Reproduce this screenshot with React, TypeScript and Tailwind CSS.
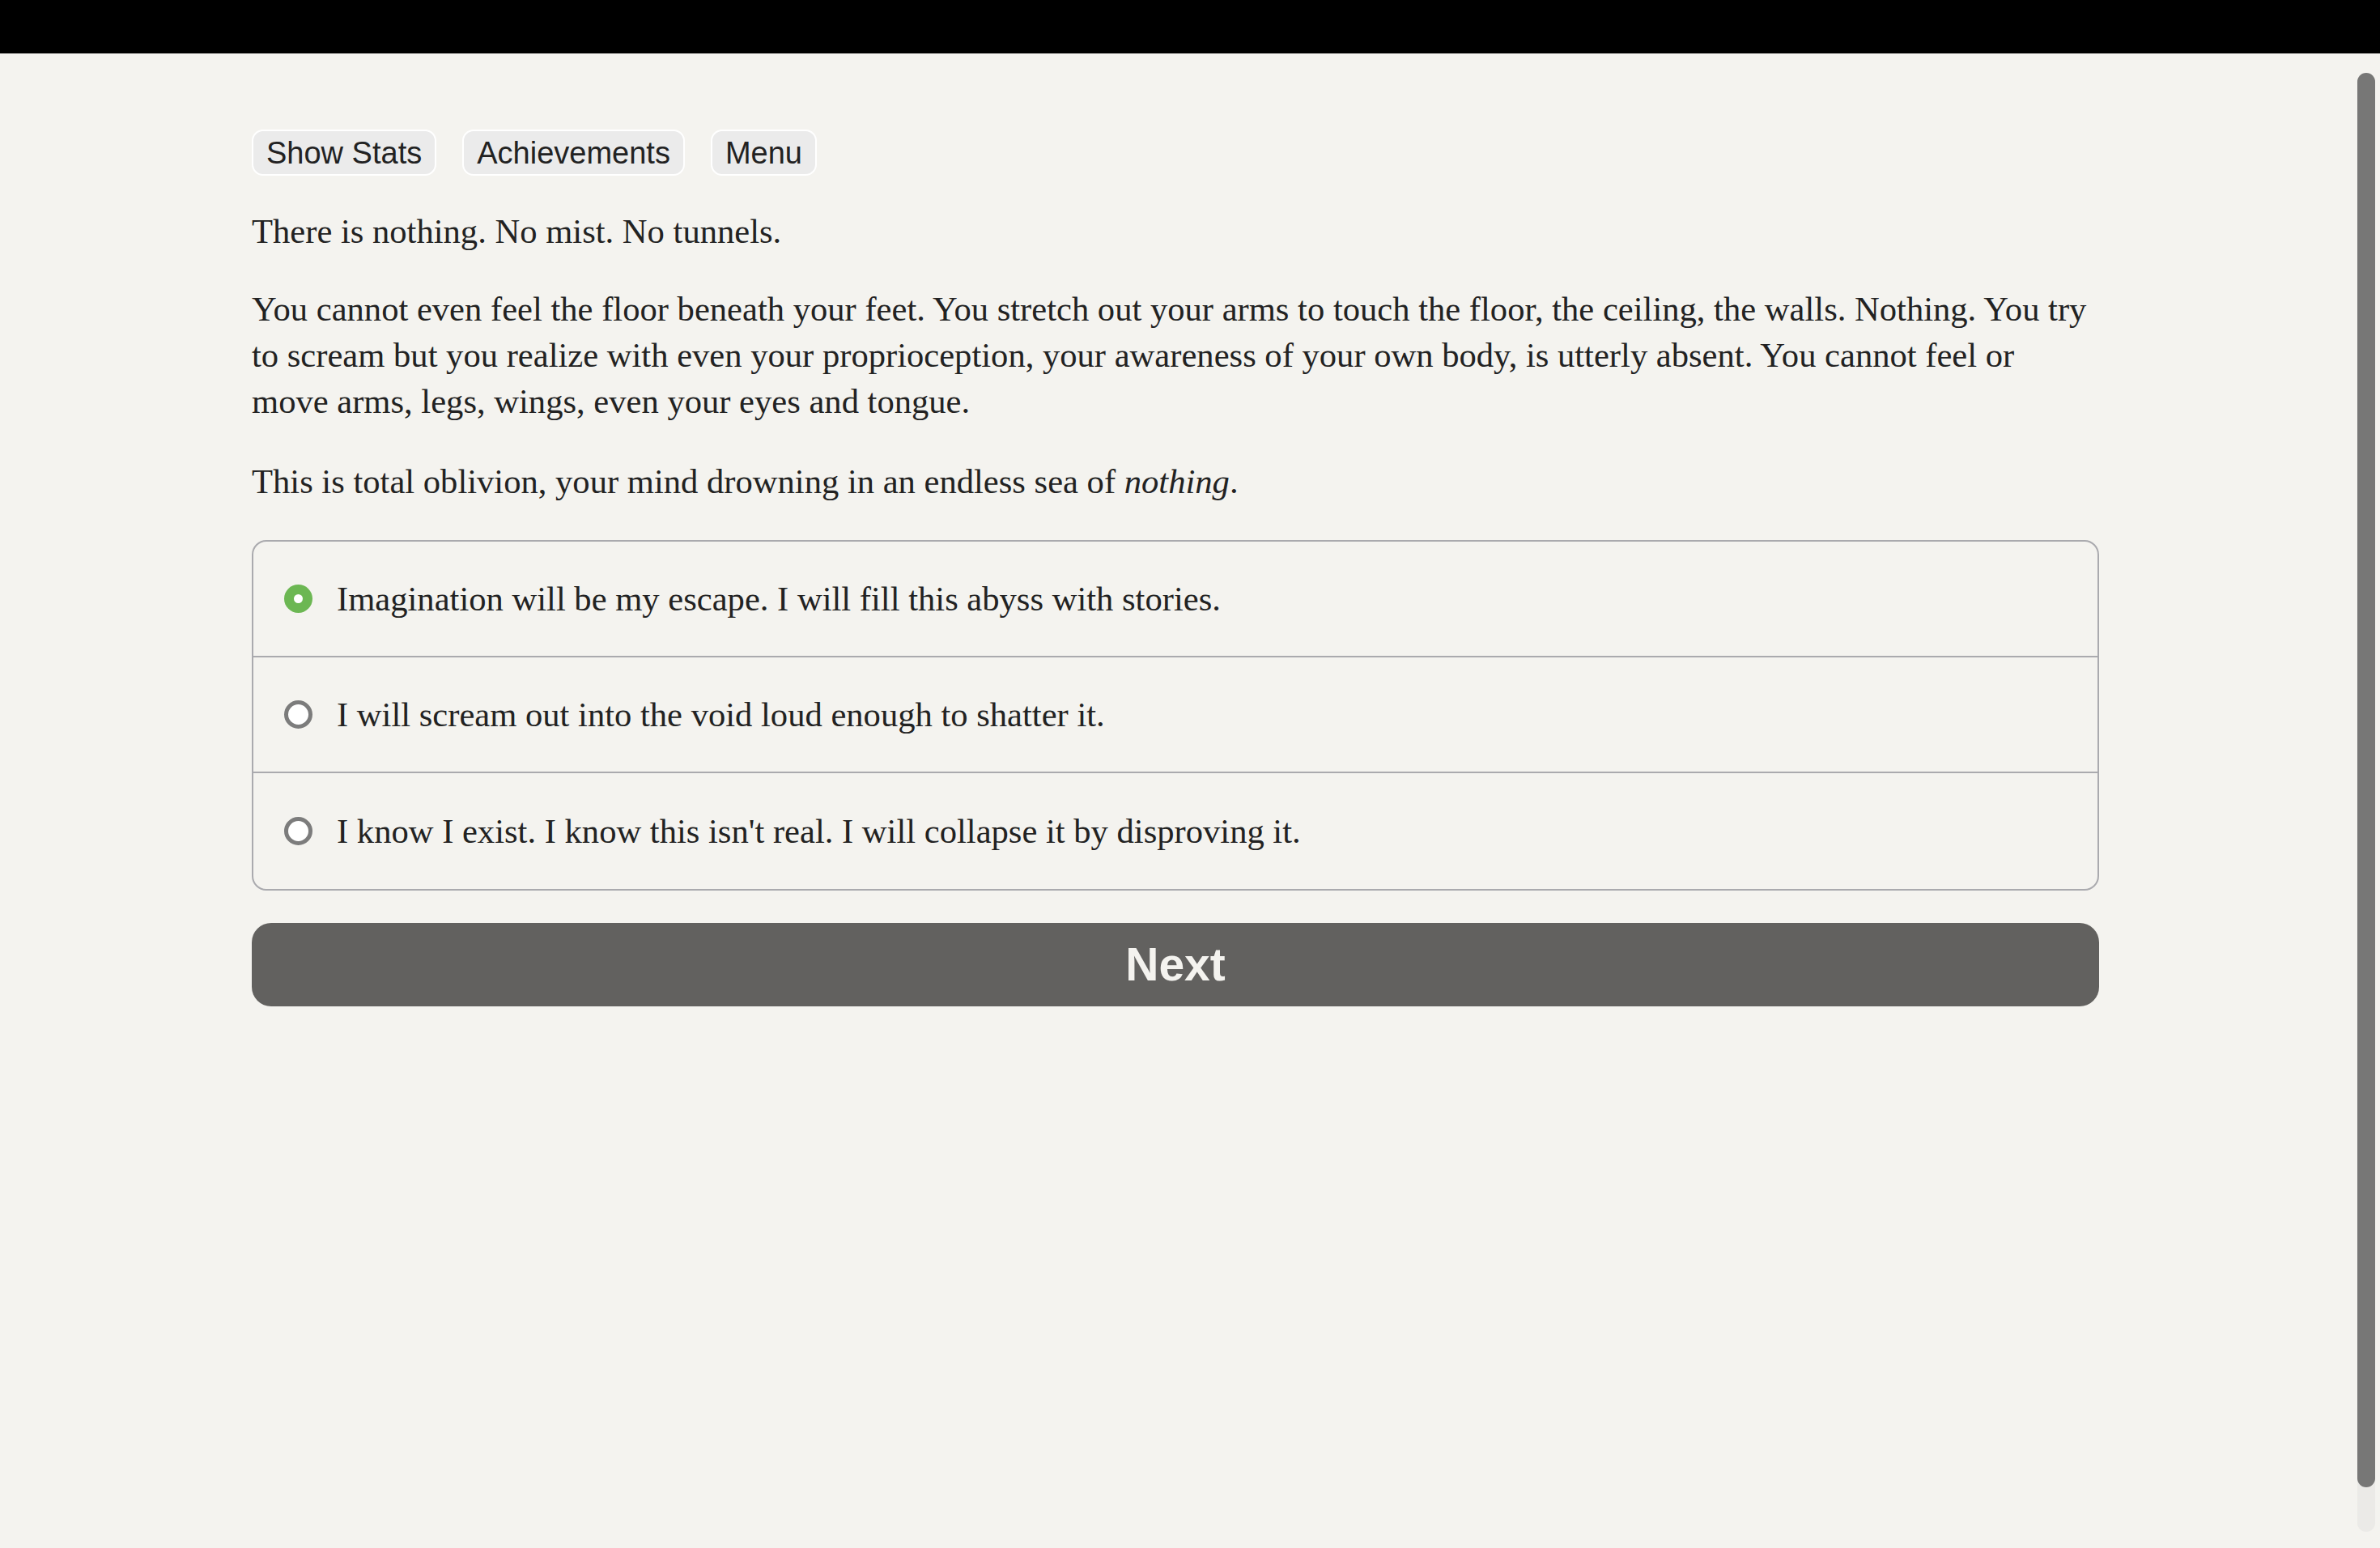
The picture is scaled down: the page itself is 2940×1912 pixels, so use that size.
import { useState } from 'react'

const choices = [
  'Imagination will be my escape. I will fill this abyss with stories.',
  'I will scream out into the void loud enough to shatter it.',
  "I know I exist. I know this isn't real. I will collapse it by disproving it.",
]

function TopButton({ label }: { label: string }) {
  return (
    <button className="h-[57px] px-[16px] rounded-[14px] border-2 border-white bg-[#ebebeb] text-[38px] leading-none text-[#222] font-['Liberation_Sans',Arial,sans-serif]">
      {label}
    </button>
  )
}

function Radio({ checked }: { checked: boolean }) {
  return checked ? (
    <span className="w-[35px] h-[35px] shrink-0 rounded-full bg-[#6cb753] flex items-center justify-center">
      <span className="w-[11px] h-[11px] rounded-full bg-white" />
    </span>
  ) : (
    <span className="w-[35px] h-[35px] shrink-0 rounded-full border-[5px] border-[#7c7c7c] bg-white" />
  )
}

export default function App() {
  const [selected, setSelected] = useState(0)

  return (
    <div className="h-screen flex flex-col bg-[#f4f3ef] text-[#222] overflow-hidden">
      <div className="h-[66px] shrink-0 bg-black" />
      <div className="flex-1 flex min-h-0">
        <main className="flex-1 min-w-0">
          <div className="w-[2282px] mx-auto pt-[94px] font-['Liberation_Serif',serif] text-[42.6px] leading-[57px]">
            <div className="flex gap-[32px]">
              <TopButton label="Show Stats" />
              <TopButton label="Achievements" />
              <TopButton label="Menu" />
            </div>

            <p className="mt-[40px]">There is nothing. No mist. No tunnels.</p>
            <p className="mt-[39px]">
              You cannot even feel the floor beneath your feet. You stretch out your arms to touch the floor,
              the ceiling, the walls. Nothing. You try to scream but you realize with even your proprioception,
              your awareness of your own body, is utterly absent. You cannot feel or move arms, legs, wings,
              even your eyes and tongue.
            </p>
            <p className="mt-[42px]">
              This is total oblivion, your mind drowning in an endless sea of <em>nothing</em>.
            </p>

            <div className="mt-[44px] border-2 border-[#aaaaae] rounded-[18px] divide-y-2 divide-[#aaaaae]">
              {choices.map((text, i) => (
                <label
                  key={i}
                  onClick={() => setSelected(i)}
                  className="h-[143px] flex items-center gap-[30px] pl-[38px] cursor-pointer"
                >
                  <Radio checked={selected === i} />
                  <span>{text}</span>
                </label>
              ))}
            </div>

            <button className="mt-[40px] w-full h-[103px] rounded-[24px] bg-[#62615f] text-[#f4f3ef] text-[57px] font-bold font-['Liberation_Sans',Arial,sans-serif]">
              Next
            </button>
          </div>
        </main>

        {/* scrollbar */}
        <div className="w-[36px] shrink-0 pl-[8px] pr-[6px] pt-[24px] pb-[20px]">
          <div className="h-full rounded-full bg-[#ebeae7]">
            <div className="h-[1747px] rounded-full bg-[#777776]" />
          </div>
        </div>
      </div>
    </div>
  )
}
